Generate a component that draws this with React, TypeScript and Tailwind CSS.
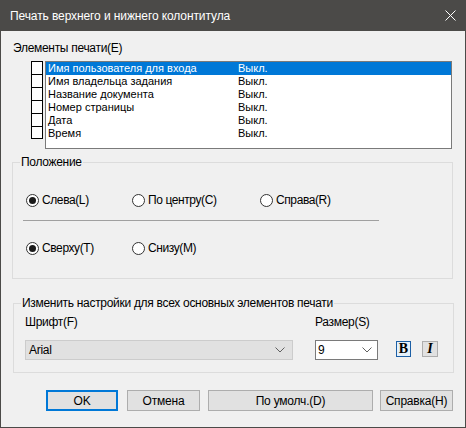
import React from "react";

const items = [
  "Имя пользователя для входа",
  "Имя владельца задания",
  "Название документа",
  "Номер страницы",
  "Дата",
  "Время",
];

function Radio({ checked, label, w }: { checked?: boolean; label: string; w: string }) {
  return (
    <div className={`flex items-center ${w}`}>
      <div className="w-[13px] h-[13px] rounded-full border border-[#333333] bg-white flex items-center justify-center shrink-0">
        {checked && <div className="w-[7px] h-[7px] rounded-full bg-[#1a1a1a]" />}
      </div>
      <span className="ml-[3px] text-[12px] leading-[15px] tracking-[-0.4px] text-black">{label}</span>
    </div>
  );
}

function Chevron() {
  return (
    <svg width="10" height="6" viewBox="0 0 10 6" className="shrink-0">
      <path d="M0.5 0.5 L5 5 L9.5 0.5" fill="none" stroke="#606060" strokeWidth="1" />
    </svg>
  );
}

function Btn({ label, w, primary }: { label: string; w: string; primary?: boolean }) {
  return (
    <div
      className={`h-[21px] ${w} flex items-center justify-center bg-[#e1e1e1] text-[12px] tracking-[-0.2px] text-black ${
        primary ? "border-2 border-[#0078d7]" : "border border-[#adadad]"
      }`}
    >
      {label}
    </div>
  );
}

export default function App() {
  return (
    <div className="w-[466px] h-[428px] bg-[#4b4a48] flex flex-col font-['Liberation_Sans',Arial,sans-serif] select-none">
      <div className="h-[31px] flex items-center justify-between pl-[10px] pr-[10px] text-white text-[12px] tracking-[-0.1px]">
        <span>Печать верхнего и нижнего колонтитула</span>
        <svg width="11" height="11" viewBox="0 0 11 11">
          <path d="M0.5 0.5 L10.5 10.5 M10.5 0.5 L0.5 10.5" stroke="#ffffff" strokeWidth="1" />
        </svg>
      </div>
      <div className="flex-1 mx-px mb-px bg-[#f0f0f0] flex flex-col text-black">
        <div className="mt-[10px] ml-[12px] text-[12px] leading-[15px] tracking-[-0.3px]">Элементы печати(E)</div>
        <div className="mt-[5px] flex">
          <div className="ml-[30px] w-[12px] flex flex-col">
            {items.map((_, i) => (
              <div
                key={i}
                className={`h-[13px] w-[12px] border-x border-t border-black bg-white ${i === items.length - 1 ? "border-b" : ""}`}
              />
            ))}
          </div>
          <div className="ml-[2px] w-[407px] h-[88px] border border-[#7a7a7a] bg-white flex flex-col">
            {items.map((t, i) => (
              <div
                key={t}
                className={`h-[13px] flex items-center text-[11px] leading-[13px] ${
                  i === 0 ? "bg-[#0078d7] text-white" : "text-black"
                }`}
              >
                <span className="pl-[2px] w-[192px]">{t}</span>
                <span>Выкл.</span>
              </div>
            ))}
          </div>
        </div>

        <fieldset className="mt-[6px] ml-[11px] w-[441px] h-[124px] border border-[#dcdcdc]">
          <legend className="ml-[7px] px-[1px] text-[12px] leading-[15px] tracking-[-0.3px]">Положение</legend>
          <div className="pl-[10px] pt-[23px] flex flex-col">
            <div className="flex pl-[3px]">
              <Radio checked label="Слева(L)" w="w-[106px]" />
              <Radio label="По центру(C)" w="w-[128px]" />
              <Radio label="Справа(R)" w="w-[120px]" />
            </div>
            <div className="mt-[12px] h-px w-[356px] bg-[#a0a0a0]" />
            <div className="mt-[20px] flex pl-[3px]">
              <Radio checked label="Сверху(T)" w="w-[106px]" />
              <Radio label="Снизу(M)" w="w-[128px]" />
            </div>
          </div>
        </fieldset>

        <fieldset className="mt-[17px] ml-[12px] w-[441px] h-[77px] border border-[#dcdcdc]">
          <legend className="ml-[7px] px-[1px] text-[12px] leading-[15px] tracking-[-0.3px]">
            Изменить настройки для всех основных элементов печати
          </legend>
          <div className="pl-[11px] pt-[4px] flex flex-col">
            <div className="flex text-[12px] leading-[15px] tracking-[-0.3px]">
              <span className="w-[290px]">Шрифт(F)</span>
              <span>Размер(S)</span>
            </div>
            <div className="mt-[10px] flex items-start">
              <div className="w-[268px] h-[20px] bg-[#e1e1e1] border border-[#cccccc] flex items-center justify-between pl-[3px] pr-[7px] text-[12px] tracking-[-0.3px]">
                <span>Arial</span>
                <Chevron />
              </div>
              <div className="ml-[22px] w-[63px] h-[20px] bg-white border border-[#7a7a7a] flex items-center justify-between pl-[2px] pr-[5px] text-[12px]">
                <span>9</span>
                <Chevron />
              </div>
              <div className="ml-[18px] mt-px w-[15px] h-[16px] bg-[#e5f1fb] border border-[#1c5fa5] flex items-center justify-center font-['Liberation_Serif',serif] font-bold text-[14px] leading-none">
                B
              </div>
              <div className="ml-[11px] mt-px w-[16px] h-[16px] bg-[#e1e1e1] border border-[#adadad] flex items-center justify-center font-['Liberation_Serif',serif] font-bold italic text-[14px] leading-none">
                I
              </div>
            </div>
          </div>
        </fieldset>

        <div className="mt-[17px] flex">
          <div className="ml-[45px]">
            <Btn label="OK" w="w-[72px]" primary />
          </div>
          <div className="ml-[9px]">
            <Btn label="Отмена" w="w-[73px]" />
          </div>
          <div className="ml-[8px]">
            <Btn label="По умолч.(D)" w="w-[165px]" />
          </div>
          <div className="ml-[7px]">
            <Btn label="Справка(H)" w="w-[73px]" />
          </div>
        </div>
      </div>
    </div>
  );
}
